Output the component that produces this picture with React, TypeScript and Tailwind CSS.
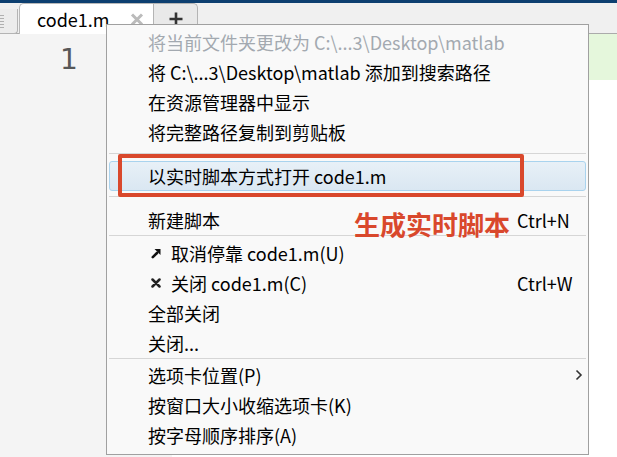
import React from 'react';

type RowProps = {
  children: React.ReactNode;
  icon?: React.ReactNode;
  shortcut?: string;
  chevron?: boolean;
  disabled?: boolean;
};

const UndockIcon = () => (
  <svg width="10" height="11" viewBox="0 0 10 11">
    <path d="M1.8 9.2 L6 5" stroke="#111" strokeWidth="2.6" strokeLinecap="round" />
    <path d="M3.5 1 H9.5 V7 Z" fill="#111" />
  </svg>
);

const CloseIcon = () => (
  <svg width="10" height="10" viewBox="0 0 10 10">
    <path d="M1.5 1.5 L8.5 8.5 M8.5 1.5 L1.5 8.5" stroke="#222" strokeWidth="2.5" strokeLinecap="round" />
  </svg>
);

const Chevron = () => (
  <svg width="8" height="12" viewBox="0 0 8 12">
    <path d="M1.5 1.5 L6 6 L1.5 10.5" stroke="#333" strokeWidth="1.6" fill="none" />
  </svg>
);

const Row: React.FC<RowProps> = ({ children, icon, shortcut, chevron, disabled }) => (
  <div className="flex h-[30px] items-center">
    {icon ? (
      <div className="flex w-[64px] shrink-0 items-center pl-[44px]">{icon}</div>
    ) : (
      <div className="w-[41px] shrink-0" />
    )}
    <div className={`flex-1 whitespace-nowrap ${disabled ? 'text-[#a3a9b0]' : 'text-black'}`}>{children}</div>
    <div className="flex w-[71px] shrink-0 items-center justify-end pr-[5px]">
      {shortcut && <span className="w-full text-black">{shortcut}</span>}
      {chevron && <Chevron />}
    </div>
  </div>
);

const Separator = () => <div className="mx-[2px] h-px bg-[#d6d6d6]" />;

export default function App() {
  return (
    <div className="relative h-[457px] w-[617px] overflow-hidden bg-white">
      {/* title bar edge */}
      <div className="h-[3px] bg-[#0d3f70]" />

      {/* tab strip */}
      <div className="flex h-[31px] items-end border-b border-[#ababab] bg-[#f0f0f0]">
        <div className="mb-[-1px] flex h-[25px] w-[18px] flex-col justify-center gap-[2px] rounded-br-[4px] border-r border-b border-[#b4b4b4] bg-[#ececec]">
          {[0, 1, 2, 3, 4].map((i) => (
            <div key={i} className="h-px w-[4px] bg-[#b0b0b0]" />
          ))}
        </div>
        <div className="mb-[-1px] ml-px flex h-[31px] w-[134px] items-center rounded-tl-[5px] border-l border-t border-[#b9b9b9] bg-white">
          <span className="ml-[17px] font-['Noto_Sans_CJK_SC','Noto_Sans',sans-serif] text-[18px] leading-none text-black">code1.m</span>
          <svg className="ml-auto mr-[9px]" width="14" height="13" viewBox="0 0 14 13">
            <path d="M2 1.5 L12 11.5 M12 1.5 L2 11.5" stroke="#bbbbbb" strokeWidth="3" />
          </svg>
        </div>
        <div className="flex h-[30px] w-[45px] items-center justify-center rounded-tr-[5px] border-x border-t border-[#b4b4b4] bg-[#e9e9e9]">
          <svg width="14" height="14" viewBox="0 0 14 14">
            <path d="M7 0.5 V13.5 M0.5 7 H13.5" stroke="#333" strokeWidth="2.6" />
          </svg>
        </div>
      </div>

      {/* editor */}
      <div className="flex h-[423px]">
        <div className="w-[172px] shrink-0 bg-[#f4f4f4]">
          <div className="ml-[60px] mt-[8px] font-['DejaVu_Sans',sans-serif] text-[28px] leading-[36px] text-[#575757]">1</div>
        </div>
        <div className="flex-1">
          <div className="h-[46px] bg-[#e5f7dc]" />
        </div>
      </div>

      {/* context menu */}
      <div className="absolute left-[106px] top-[24px] h-[431px] w-[483px] border border-[#a0a0a0] bg-[#f9f9f9] pt-[2px] font-['Noto_Sans_CJK_SC','Noto_Sans',sans-serif] text-[18px] leading-none">
        <Row disabled>将当前文件夹更改为 C:\...3\Desktop\matlab</Row>
        <Row>将 C:\...3\Desktop\matlab 添加到搜索路径</Row>
        <Row>在资源管理器中显示</Row>
        <Row>将完整路径复制到剪贴板</Row>
        <div className="h-[6px]" />
        <Separator />
        <div className="h-[7px]" />
        <div className="mx-[2px] flex h-[30px] items-center rounded-[3px] border border-[#a9d3ee] bg-gradient-to-b from-[#e8f0f7] to-[#dae7f2] pl-[38px] text-black">
          以实时脚本方式打开 code1.m
        </div>
        <div className="h-[5px]" />
        <Separator />
        <div className="h-[8px]" />
        <Row shortcut="Ctrl+N">新建脚本</Row>
        <Separator />
        <div className="h-[2px]" />
        <Row icon={<UndockIcon />}>取消停靠 code1.m(U)</Row>
        <Row icon={<CloseIcon />} shortcut="Ctrl+W">关闭 code1.m(C)</Row>
        <Row>全部关闭</Row>
        <Row>关闭...</Row>
        <Separator />
        <div className="h-px" />
        <Row chevron>选项卡位置(P)</Row>
        <Row>按窗口大小收缩选项卡(K)</Row>
        <Row>按字母顺序排序(A)</Row>
      </div>

      {/* annotation */}
      <div className="absolute left-[118px] top-[154px] h-[43px] w-[406px] rounded-[2px] border-[4px] border-[#d9482c]" />
      <div className="absolute left-[354px] top-[211px] font-['Noto_Sans_CJK_SC',sans-serif] text-[26px] font-bold leading-none text-[#d9482c]">
        生成实时脚本
      </div>
    </div>
  );
}
